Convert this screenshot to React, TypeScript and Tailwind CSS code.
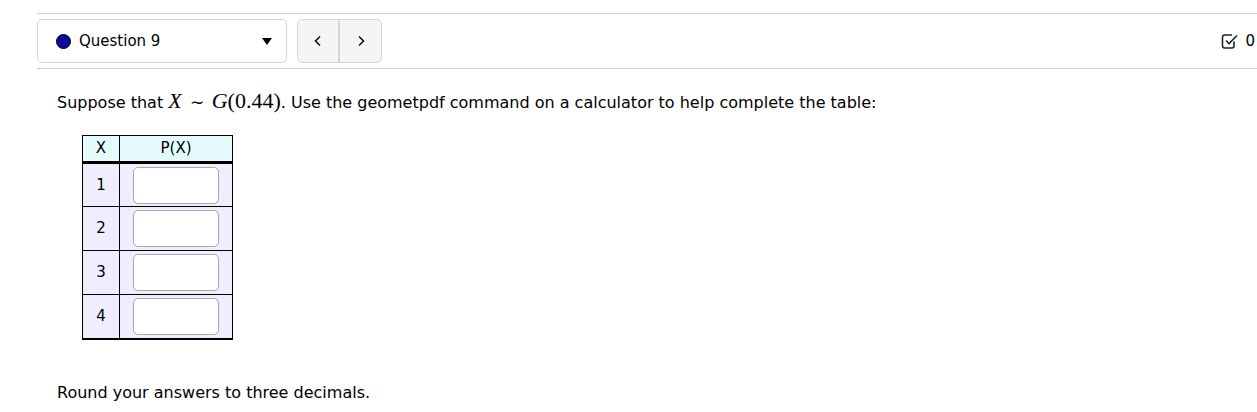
import React from "react";

const rows = [1, 2, 3, 4];

const App = () => {
  return (
    <div className="h-[412px] w-[1257px] bg-white font-['DejaVu_Sans',sans-serif] text-[16px] text-black">
      {/* toolbar */}
      <div className="ml-[37px] mt-[13px] border-y border-[#d0d0d0] flex items-center h-[56px]">
        <div className="flex h-[44px] w-[250px] items-center rounded-[5px] border border-[#d6d6d6] pl-[18px] pr-[14px]">
          <span className="h-[15px] w-[15px] rounded-full border-[1.5px] border-black bg-[#0a0a9e]" />
          <span className="ml-[8px] text-[15px]">Question 9</span>
          <span className="ml-auto h-0 w-0 border-x-[5px] border-t-[7px] border-x-transparent border-t-black" />
        </div>
        <div className="ml-[10px] flex h-[44px] w-[85px] rounded-[5px] border border-[#d6d6d6] bg-[#f5f5f5]">
          <button className="flex w-[42px] items-center justify-center border-r-2 border-[#d6d6d6]">
            <svg width="10" height="12" viewBox="0 0 10 12" fill="none">
              <path d="M7 1.5L2.5 6L7 10.5" stroke="#111" strokeWidth="1.6" />
            </svg>
          </button>
          <button className="flex flex-1 items-center justify-center">
            <svg width="10" height="12" viewBox="0 0 10 12" fill="none">
              <path d="M3 1.5L7.5 6L3 10.5" stroke="#111" strokeWidth="1.6" />
            </svg>
          </button>
        </div>
        <div className="ml-auto flex items-center gap-[6px] pr-[2px]">
          <svg width="18" height="18" viewBox="0 0 18 18" fill="none">
            <path
              d="M13 9.5V14a2 2 0 0 1-2 2H3.5a2 2 0 0 1-2-2V5a2 2 0 0 1 2-2H11"
              stroke="#222"
              strokeWidth="1.6"
            />
            <path d="M5 8.5L8 11.5L16 3.5" stroke="#222" strokeWidth="1.6" />
          </svg>
          <span className="text-[15px]">0</span>
        </div>
      </div>

      <div className="pl-[57px]">
        <p className="mt-[15px] flex items-baseline">
          <span>Suppose that&nbsp;</span>
          <span className="font-['Liberation_Serif',serif] text-[22px]">
            <i>X</i>
            <span className="mx-[8px] text-[17px]">∼</span>
            <i>G</i>(0.44)
          </span>
          <span>. Use the geometpdf command on a calculator to help complete the table:</span>
        </p>

        <table className="ml-[25px] mt-[18px] border-collapse border-b-2 border-black text-[15px]">
          <thead>
            <tr className="bg-[#e6fcfc]">
              <th className="h-[27px] w-[37px] border border-black border-b-[3px] font-normal">X</th>
              <th className="w-[113px] border border-black border-b-[3px] font-normal">P(X)</th>
            </tr>
          </thead>
          <tbody>
            {rows.map((r) => (
              <tr key={r} className="bg-[#eeeeff]">
                <td className="h-[44px] border border-black text-center">{r}</td>
                <td className="border border-black px-[13px]">
                  <input
                    className="block h-[37px] w-[86px] rounded-[5px] border border-[#a8a8a8] bg-white"
                    type="text"
                  />
                </td>
              </tr>
            ))}
          </tbody>
        </table>

        <p className="mt-[41px]">Round your answers to three decimals.</p>
      </div>
    </div>
  );
};

export default App;
